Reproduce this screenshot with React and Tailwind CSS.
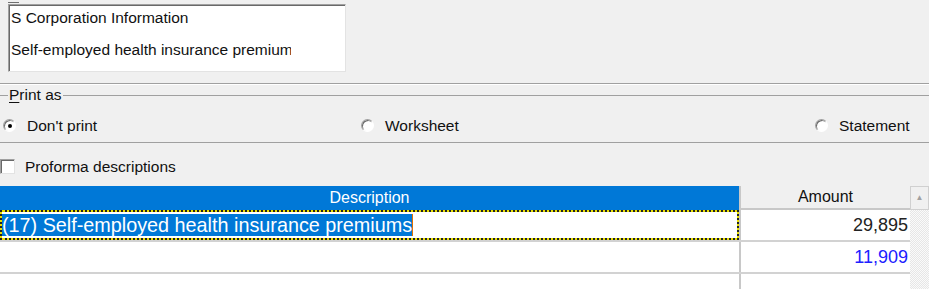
const radio = (checked) => (
  <span className="relative inline-flex h-[13px] w-[13px] items-center justify-center rounded-full border border-t-[#a0a0a0] border-l-[#a0a0a0] border-b-[#fff] border-r-[#fff] bg-white shadow-[inset_1px_1px_0_#696969]">
    {checked && <span className="h-[4px] w-[4px] rounded-full bg-black" />}
  </span>
);

function Radio({ label, checked }) {
  return (
    <label className="flex items-center gap-[11px]">
      {radio(checked)}
      <span>{label}</span>
    </label>
  );
}

export default function App() {
  const rows = [
    { desc: "(17) Self-employed health insurance premiums", amount: "29,895", selected: true },
    { desc: "", amount: "11,909", blue: true },
    { desc: "", amount: "" },
  ];

  return (
    <div className="h-[289px] w-[929px] overflow-hidden bg-[#f0f0f0] font-['Liberation_Sans',Arial,sans-serif] text-[15.5px] text-[#111]">
      <div className="ml-[8px] h-[3px] w-[11px] border-b border-[#707070]" />

      {/* list box */}
      <div className="ml-[8px] mt-[1px] h-[68px] w-[338px] border border-t-[#a0a0a0] border-l-[#a0a0a0] border-b-[#e3e3e3] border-r-[#e3e3e3] bg-white shadow-[inset_1px_1px_0_#696969]">
        <div className="overflow-hidden whitespace-nowrap pl-[2px] pt-[4px] pr-[54px]">
          <div className="h-[32px] leading-[17px]">S Corporation Information</div>
          <div className="h-[32px] overflow-hidden leading-[17px]">Self-employed health insurance premiums</div>
        </div>
      </div>

      <div className="mt-[11px] border-t border-b border-t-[#a0a0a0] border-b-white" />

      {/* print as */}
      <fieldset className="mt-[2px] h-[56px] border-t border-b border-t-[#a0a0a0] border-b-[#a0a0a0]">
        <legend className="ml-[8px] px-[1px] leading-[16px]">
          <span className="underline underline-offset-2">P</span>rint as
        </legend>
        <div className="flex items-center pt-[11px] pl-[3px]">
          <div className="w-[358px]">
            <Radio label="Don't print" checked />
          </div>
          <div className="w-[454px]">
            <Radio label="Worksheet" />
          </div>
          <Radio label="Statement" />
        </div>
      </fieldset>

      <div className="flex items-center gap-[10px] pt-[12px]">
        <span className="h-[15px] w-[15px] border border-t-[#a0a0a0] border-l-[#a0a0a0] border-b-[#e3e3e3] border-r-[#e3e3e3] bg-white shadow-[inset_1px_1px_0_#696969]" />
        <span>Proforma descriptions</span>
      </div>

      {/* grid */}
      <div className="mt-[8px] flex">
        <div className="w-[910px]">
          <div className="flex h-[24px] text-[16px]">
            <div className="flex w-[741px] items-center justify-center border-r-2 border-[#c8c8c8] bg-[#0078d7] text-white">
              Description
            </div>
            <div className="flex flex-1 items-center justify-center border-b-2 border-[#c8c8c8] bg-[#f0f0f0]">
              Amount
            </div>
          </div>
          {rows.map((r, i) => (
            <div key={i} className="flex h-[32px] border-b-2 border-[#d2d2d2] bg-white text-[18px]">
              <div className="w-[741px] border-r-2 border-[#c8c8c8]">
                {r.selected ? (
                  <div className="h-full border-2 border-dotted border-[#222] bg-[#e8e000]">
                    <div className="flex h-full items-center bg-white text-[19.8px]">
                      <span className="bg-[#0078d7] leading-[22px] text-white">{r.desc}</span>
                      <span className="h-[22px] w-[1px] bg-[#e07000]" />
                    </div>
                  </div>
                ) : (
                  <span>{r.desc}</span>
                )}
              </div>
              <div className={`flex flex-1 items-center justify-end pr-[2px] ${r.blue ? "text-[#2020ff]" : "text-[#222]"}`}>
                {r.amount}
              </div>
            </div>
          ))}
        </div>

        {/* scrollbar */}
        <div className="w-[19px]">
          <div className="flex h-[24px] items-center justify-center border border-[#d0d0d0] bg-[#f0f0f0] text-[8px] text-[#a0a0a0]">
            ▲
          </div>
          <div className="h-[100px] bg-[repeating-conic-gradient(#e6e6e6_0_25%,#fafafa_0_50%)] bg-[length:2px_2px]" />
        </div>
      </div>
    </div>
  );
}
